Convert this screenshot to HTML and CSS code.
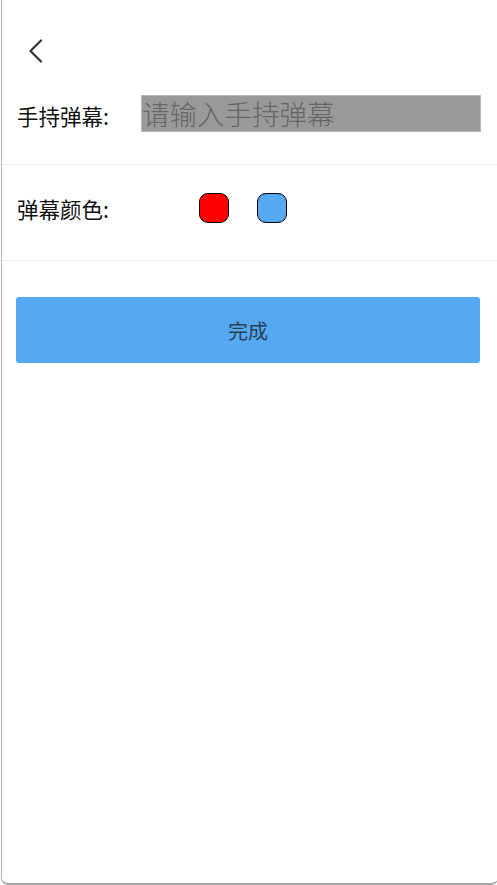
FILE: index.html
```html
<!DOCTYPE html>
<html lang="zh">
<head>
<meta charset="utf-8">
<title>手持弹幕</title>
<link rel="stylesheet" href="styles.css">
</head>
<body>
<div class="frame">
  <div class="header">
    <svg class="back" width="16" height="24" viewBox="0 0 16 24"><path d="M13 1.5 L2.5 12 L13 22.5" fill="none" stroke="#333" stroke-width="2.2" stroke-linecap="round" stroke-linejoin="round"/></svg>
  </div>
  <div class="row row-text">
    <span class="label label-text">手持弹幕:</span>
    <input class="input" type="text" placeholder="请输入手持弹幕">
  </div>
  <div class="divider"></div>
  <div class="row row-color">
    <span class="label label-color">弹幕颜色:</span>
    <div class="swatches">
      <span class="swatch swatch-red"></span>
      <span class="swatch swatch-blue"></span>
    </div>
  </div>
  <div class="divider"></div>
  <button class="done">完成</button>
</div>
</body>
</html>
```
FILE: styles.css
```css
html, body {
  margin: 0;
  padding: 0;
  background: #fff;
}
body {
  font-family: "Noto Sans CJK SC", "Noto Sans", sans-serif;
  color: #111;
}
.frame {
  box-sizing: border-box;
  width: 497px;
  height: 885px;
  margin-left: 1px;
  border-left: 1px solid #b4b4b4;
  border-bottom: 2px solid #a8a8a8;
  border-radius: 0 0 7px 7px;
  background: #fff;
}
.header {
  height: 95px;
  box-sizing: border-box;
  padding: 39px 0 0 26px;
}
.back {
  display: block;
}
.row {
  display: flex;
  align-items: center;
}
.row-text {
  height: 37px;
  padding-left: 15px;
  margin-bottom: 32px;
}
.label {
  font-size: 21.5px;
  line-height: 26px;
  flex: none;
}
.label-text {
  width: 124px;
  padding-top: 5px;
}
.input {
  box-sizing: border-box;
  width: 340px;
  height: 37px;
  margin: 0;
  padding: 0 0 2px 0;
  border: 1px solid #b8b8b8;
  background: #999;
  font-family: "Noto Sans CJK SC", "Noto Sans", sans-serif;
  font-size: 27.5px;
  font-weight: 300;
  color: #333;
  outline: none;
}
.input::placeholder {
  color: #666;
}
.divider {
  height: 1px;
  background: #efefef;
}
.row-color {
  padding: 28px 0 37px 15px;
}
.label-color {
  width: 182px;
  padding-top: 2px;
}
.swatches {
  display: flex;
  gap: 28px;
}
.swatch {
  box-sizing: border-box;
  width: 30px;
  height: 30px;
  border: 1px solid #000;
  border-radius: 9px;
}
.swatch-red {
  background: #ff0000;
}
.swatch-blue {
  background: #55a8f2;
}
.done {
  display: block;
  box-sizing: border-box;
  width: 464px;
  height: 66px;
  margin: 36px 0 0 14px;
  border: none;
  border-radius: 3px;
  background: #55a8f2;
  color: #2b3f55;
  font-family: "Noto Sans CJK SC", "Noto Sans", sans-serif;
  font-size: 20px;
  padding: 0;
}
```
